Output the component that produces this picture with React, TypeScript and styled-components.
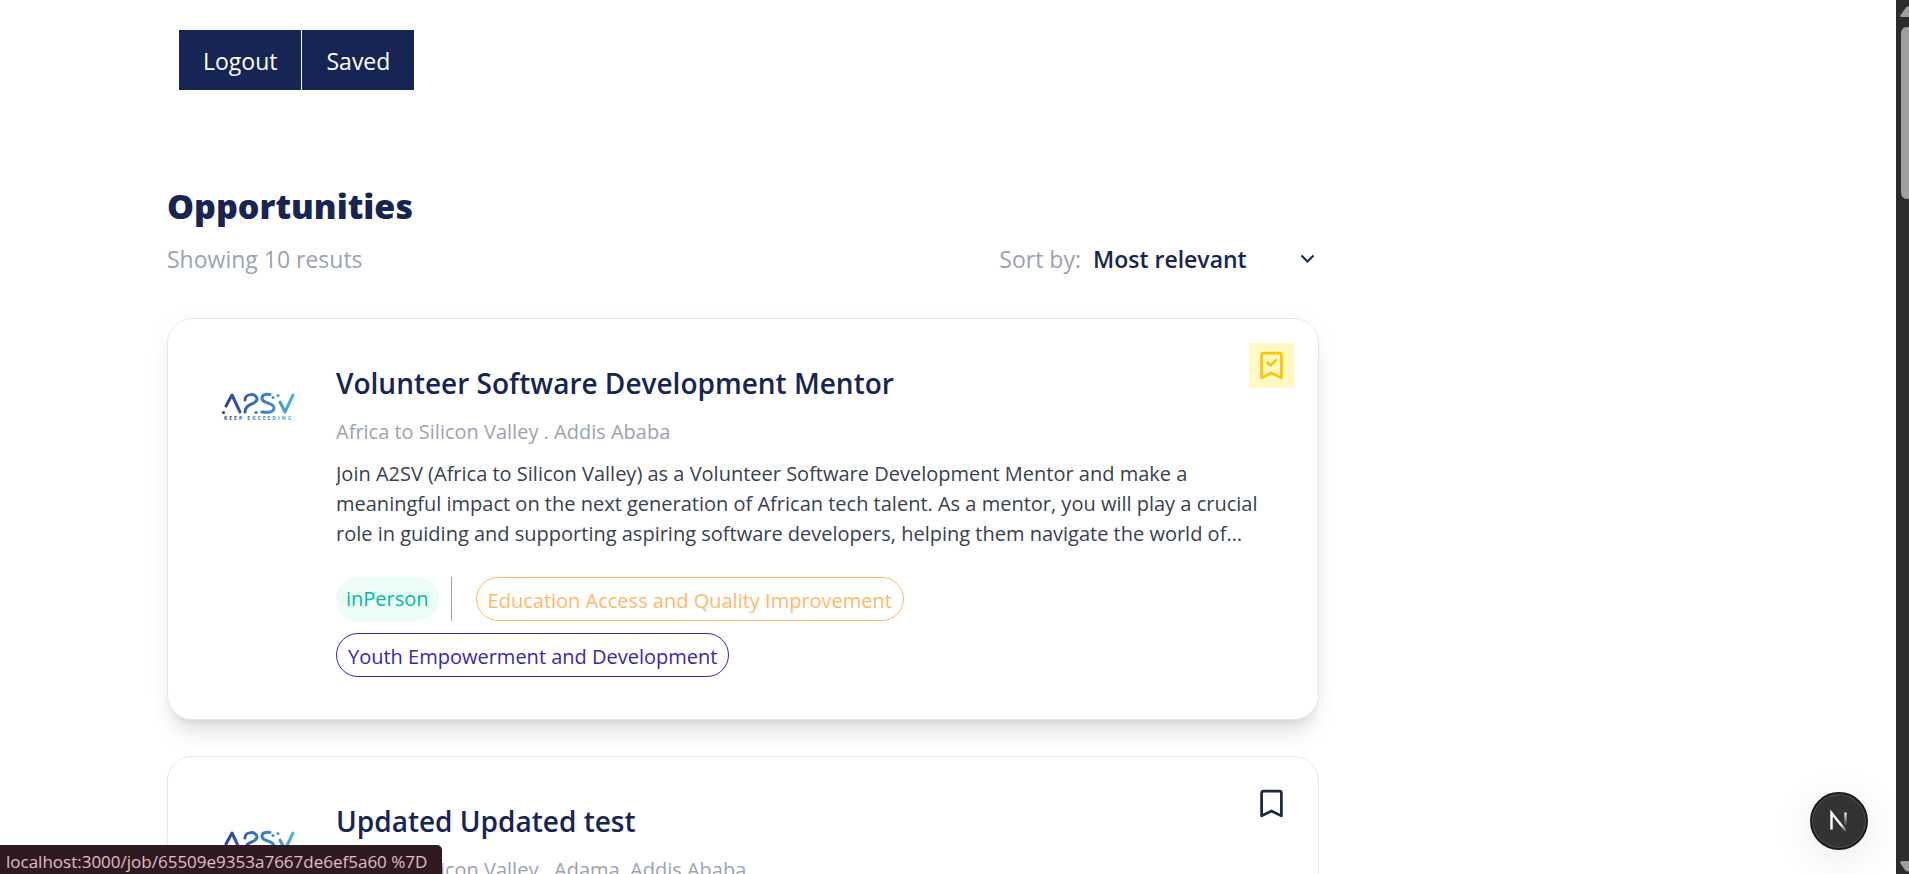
import React from "react";
import styled, { createGlobalStyle, css } from "styled-components";

const GlobalStyle = createGlobalStyle`
  *, *::before, *::after { box-sizing: border-box; }
  html, body, #root { height: 100%; }
  body {
    margin: 0;
    overflow: hidden;
    background: #fff;
    color: #172554;
    font-family: "Open Sans", "Noto Sans", sans-serif;
  }
  h1, h2, p { margin: 0; }
`;

const Window = styled.div`
  display: flex;
  height: 100vh;
`;

const Viewport = styled.div`
  flex: 1;
  min-width: 0;
  overflow: hidden;
`;

const Page = styled.main`
  max-width: 1319px;
  padding: 30px 0 0 167px;
`;

const Nav = styled.nav`
  display: flex;
  gap: 1px;
  padding-left: 12px;
`;

const NavButton = styled.button`
  height: 60px;
  padding: 2px 24px 0;
  border: 0;
  background: #172554;
  color: #fff;
  font: 400 23px/32px "Open Sans", sans-serif;
  cursor: pointer;
`;

const Header = styled.header`
  margin-top: 92px;
`;

const Heading = styled.h1`
  font-family: "Noto Sans", sans-serif;
  font-size: 34px;
  font-weight: 900;
  line-height: 48px;
`;

const SubBar = styled.div`
  display: flex;
  align-items: center;
  justify-content: space-between;
  margin-top: 13px;
  color: #9ca3af;
  font-size: 23px;
  line-height: 32px;
`;

const Sort = styled.label`
  display: flex;
  align-items: center;
  gap: 12px;
`;

const SelectWrap = styled.span`
  display: grid;
  align-items: center;
  width: 226px;
`;

const Select = styled.select`
  grid-area: 1 / 1;
  appearance: none;
  border: 0;
  padding: 0;
  background: transparent;
  color: #172554;
  font: 600 23px/32px "Open Sans", sans-serif;
`;

const SelectArrow = styled.svg`
  grid-area: 1 / 1;
  justify-self: end;
  margin-right: 4px;
  pointer-events: none;
`;

const List = styled.section`
  display: flex;
  flex-direction: column;
  gap: 36px;
  margin-top: 43px;
`;

const Card = styled.article<{ $raised?: boolean }>`
  position: relative;
  display: flex;
  gap: 36px;
  padding: 44px 48px 42px;
  border: 1px solid #e5e7eb;
  border-radius: 25px;
  background: #fff;
  ${(p) =>
    p.$raised &&
    css`
      box-shadow: 0 18px 20px -4px rgba(0, 0, 0, 0.09), 0 6px 8px -5px rgba(0, 0, 0, 0.1),
        0 4px 28px rgba(0, 0, 0, 0.03);
    `}
`;

const Logo = styled.svg`
  flex: none;
  width: 84px;
  height: 84px;
`;

const Content = styled.div`
  flex: 1;
  min-width: 0;
`;

const Title = styled.h2`
  font-size: 28px;
  font-weight: 600;
  line-height: 40px;
`;

const Place = styled.p`
  margin-top: 14px;
  color: #9ca3af;
  font-size: 20px;
  line-height: 30px;
`;

const Summary = styled.p`
  display: -webkit-box;
  margin-top: 12px;
  overflow: hidden;
  -webkit-box-orient: vertical;
  -webkit-line-clamp: 3;
  color: #374151;
  font-size: 20px;
  line-height: 30px;
`;

const Tags = styled.div`
  display: flex;
  flex-wrap: wrap;
  gap: 12px;
  margin-top: 28px;
`;

const Tag = styled.span<{ $color: string; $fill?: string }>`
  height: 44px;
  padding: ${(p) => (p.$fill ? "7px 10px" : "8px 11px")};
  border: ${(p) => (p.$fill ? 0 : "1px solid")};
  border-radius: 25px;
  background: ${(p) => p.$fill ?? "transparent"};
  color: ${(p) => p.$color};
  font-size: 20px;
  line-height: 30px;
`;

const Divider = styled.span`
  width: 1px;
  height: 44px;
  margin-right: 12px;
  background: #9ca3af;
`;

const SaveButton = styled.button<{ $saved?: boolean }>`
  position: absolute;
  top: 24px;
  right: 24px;
  display: grid;
  place-items: center;
  width: 45px;
  height: 45px;
  padding: 0;
  border: 0;
  background: ${(p) => (p.$saved ? "#fef9c2" : "transparent")};
  color: ${(p) => (p.$saved ? "#fdc700" : "#1e2939")};
  cursor: pointer;
`;

const StatusBubble = styled.div`
  position: fixed;
  bottom: 0;
  left: 0;
  height: 29px;
  padding: 0 15px 0 6px;
  border-radius: 0 5px 0 0;
  background: #2f1a21;
  color: #e3bcc8;
  font-size: 17px;
  line-height: 34px;
  white-space: nowrap;
`;

const DevButton = styled.button`
  position: fixed;
  right: 41px;
  bottom: 24px;
  display: grid;
  place-items: center;
  width: 58px;
  height: 58px;
  padding: 0;
  border: 2px solid #1a1a1a;
  border-radius: 50%;
  background: #333;
  box-shadow: inset 0 0 0 1px #555, 0 8px 40px rgba(0, 0, 0, 0.09);
`;

const Scrollbar = styled.div`
  display: flex;
  flex: none;
  flex-direction: column;
  justify-content: space-between;
  width: 13px;
  background: #2c2c2c;
`;

const DESCRIPTION =
  "Join A2SV (Africa to Silicon Valley) as a Volunteer Software Development Mentor and make a meaningful impact on the next generation of African tech talent. As a mentor, you will play a crucial role in guiding and supporting aspiring software developers, helping them navigate the world of software engineering and build lasting careers in the technology industry.";

function A2svLogo({ id }: { id: string }) {
  const ink = `url(#${id})`;
  return (
    <Logo viewBox="0 0 84 84" role="img" aria-label="A2SV Keep Exceeding">
      <defs>
        <linearGradient id={id} gradientUnits="userSpaceOnUse" x1="6" y1="0" x2="78" y2="0">
          <stop offset="0" stopColor="#2b3f86" />
          <stop offset="0.45" stopColor="#376fb4" />
          <stop offset="1" stopColor="#4bb2e2" />
        </linearGradient>
      </defs>
      <g fill="none" stroke={ink} strokeWidth="3" strokeLinecap="round" strokeLinejoin="round">
        <path d="M10 43 L16 32 L24 49" />
        <path d="M29 37 C29 30 41 30 41 36 C41 42 29 40 29 49" />
        <path d="M54 31.500 C49 30.500 46 32 46 35.500 C46 41 58 39 58 45 C58 49 53 50 46 49" />
        <path d="M64 39 L69 49 L77 32" />
      </g>
      <g fill={ink}>
        <circle cx="7.500" cy="49.500" r="1.600" />
        <circle cx="40" cy="49.500" r="1.600" />
        <circle cx="57" cy="34.500" r="1.500" />
        <circle cx="62" cy="32.500" r="1.500" />
      </g>
      <text x="8" y="57" fill={ink} fontFamily="Open Sans, sans-serif" fontSize="5" fontWeight="700" letterSpacing="2">
        KEEP EXCEEDING
      </text>
    </Logo>
  );
}

function Bookmark({ saved }: { saved?: boolean }) {
  return (
    <svg
      width="33"
      height="33"
      viewBox="0 0 24 24"
      fill="none"
      stroke="currentColor"
      strokeWidth="2"
      strokeLinecap="round"
      strokeLinejoin="round"
      aria-hidden="true"
    >
      <path d="M4.800 4.500a1.500 1.500 0 0 1 1.500-1.500h11.400a1.500 1.500 0 0 1 1.500 1.500v16.500l-7.200-3.600L4.800 21z" />
      {saved && <path d="M9.200 10l2 2 4-3.800" />}
    </svg>
  );
}

type TagInfo = { label: string; color: string };
type Job = { title: string; place: string; saved?: boolean; tags: TagInfo[] };

const TAGS: TagInfo[] = [
  { label: "Education Access and Quality Improvement", color: "#ffb86a" },
  { label: "Youth Empowerment and Development", color: "#372aac" },
];

const JOBS: Job[] = [
  {
    title: "Volunteer Software Development Mentor",
    place: "Africa to Silicon Valley . Addis Ababa",
    saved: true,
    tags: TAGS,
  },
  {
    title: "Updated Updated test",
    place: "Africa to Silicon Valley . Adama, Addis Ababa",
    tags: TAGS,
  },
];

function JobCard({ job, index }: { job: Job; index: number }) {
  return (
    <Card $raised={job.saved}>
      <A2svLogo id={`logo-ink-${index}`} />
      <Content>
        <Title>{job.title}</Title>
        <Place>{job.place}</Place>
        <Summary>{DESCRIPTION}</Summary>
        <Tags>
          <Tag $color="#00bba7" $fill="#ecfdf5">inPerson</Tag>
          <Divider />
          {job.tags.map((tag) => (
            <Tag key={tag.label} $color={tag.color}>{tag.label}</Tag>
          ))}
        </Tags>
      </Content>
      <SaveButton $saved={job.saved} aria-label={job.saved ? "Remove bookmark" : "Bookmark"}>
        <Bookmark saved={job.saved} />
      </SaveButton>
    </Card>
  );
}

export default function App() {
  return (
    <>
      <GlobalStyle />
      <Window>
        <Viewport>
          <Page>
            <Nav>
              <NavButton>Logout</NavButton>
              <NavButton>Saved</NavButton>
            </Nav>
            <Header>
              <Heading>Opportunities</Heading>
              <SubBar>
                <p>Showing 10 resuts</p>
                <Sort>
                  Sort by:
                  <SelectWrap>
                    <Select defaultValue="relevant">
                      <option value="relevant">Most relevant</option>
                      <option value="recent">Most recent</option>
                    </Select>
                    <SelectArrow width="15" height="10" viewBox="0 0 15 10" fill="none" stroke="#172554" strokeWidth="2">
                      <path d="M1.500 1.500 L7.500 7.500 L13.500 1.500" />
                    </SelectArrow>
                  </SelectWrap>
                </Sort>
              </SubBar>
            </Header>
            <List>
              {JOBS.map((job, index) => (
                <JobCard key={job.title} job={job} index={index} />
              ))}
            </List>
          </Page>
        </Viewport>
        <Scrollbar aria-hidden="true">
          <svg width="13" height="200" viewBox="0 0 13 200" fill="#9f9f9f">
            <path d="M10 7.500 Q11.500 5.500 13 7 V17 H6 Q3.500 17 4.500 15 Z" />
            <path d="M13 27 H11 Q5 27 5 34 V192 Q5 199 11 199 H13 Z" />
          </svg>
          <svg width="13" height="16" viewBox="0 0 13 16" fill="#9f9f9f">
            <path d="M13 3 H6 Q3.500 3 4.500 5.500 L9 12 Q10 13.500 13 13.500 Z" />
          </svg>
        </Scrollbar>
      </Window>
      <StatusBubble>localhost:3000/job/65509e9353a7667de6ef5a60 %7D</StatusBubble>
      <DevButton aria-label="Open developer tools">
        <svg width="24" height="24" viewBox="0 0 24 24" fill="none" strokeWidth="2.400">
          <defs>
            <linearGradient id="n-slash" gradientUnits="userSpaceOnUse" x1="14" y1="15" x2="20" y2="22">
              <stop offset="0" stopColor="#fff" />
              <stop offset="1" stopColor="#fff" stopOpacity="0.100" />
            </linearGradient>
            <linearGradient id="n-stem" gradientUnits="userSpaceOnUse" x1="0" y1="3" x2="0" y2="17">
              <stop offset="0" stopColor="#fff" />
              <stop offset="1" stopColor="#fff" stopOpacity="0" />
            </linearGradient>
          </defs>
          <path d="M4.500 20.500 V4 L19 22" stroke="url(#n-slash)" />
          <path d="M18.500 3.500 V17" stroke="url(#n-stem)" />
        </svg>
      </DevButton>
    </>
  );
}
